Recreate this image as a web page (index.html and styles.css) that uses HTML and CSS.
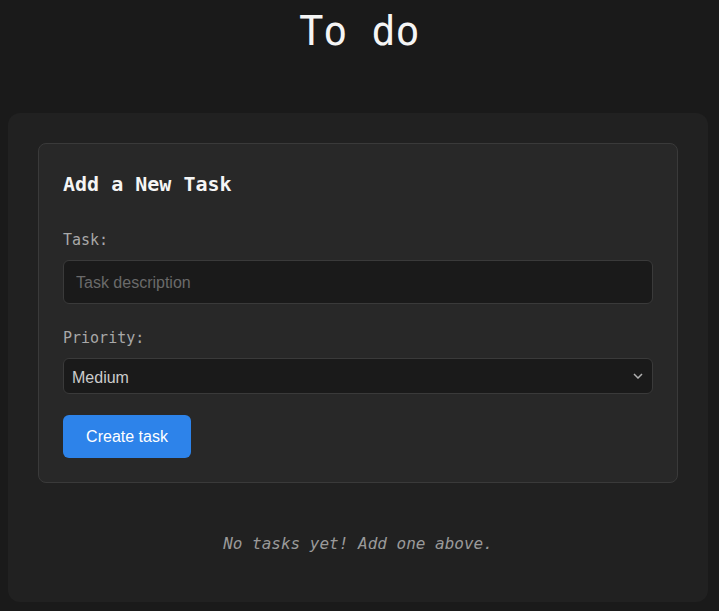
FILE: index.html
```html
<!DOCTYPE html>
<html lang="en">
<head>
<meta charset="utf-8">
<title>To do</title>
<link rel="stylesheet" href="styles.css">
</head>
<body>
<h1 class="title">To do</h1>
<main class="container">
  <section class="form-card">
    <h2 class="form-title">Add a New Task</h2>
    <div class="form-group form-group--text">
      <label class="label" for="task">Task:</label>
      <input class="input" id="task" type="text" placeholder="Task description">
    </div>
    <div class="form-group">
      <label class="label" for="priority">Priority:</label>
      <div class="select-wrap">
        <select class="select" id="priority">
          <option>Low</option>
          <option selected>Medium</option>
          <option>High</option>
        </select>
        <svg class="chevron" width="10" height="6" viewBox="0 0 10 6" aria-hidden="true"><path d="M1 1l4 4 4-4" fill="none" stroke="#b0b0b0" stroke-width="1.5"/></svg>
      </div>
    </div>
    <button class="btn" type="button">Create task</button>
  </section>
  <p class="empty">No tasks yet! Add one above.</p>
</main>
</body>
</html>
```
FILE: styles.css
```css
html, body {
  background: #1a1a1a;
}
body {
  margin: 8px;
  font-family: "DejaVu Sans Mono", "Liberation Mono", monospace;
  color: #eeeeee;
}
.title {
  margin: 0 0 58px;
  text-align: center;
  font-size: 40px;
  font-weight: 400;
  line-height: 47px;
  color: #f5f5f5;
}
.container {
  width: 700px;
  box-sizing: border-box;
  background: #212121;
  border-radius: 12px;
  padding: 30px;
}
.form-card {
  background: #282828;
  border: 1px solid #3a3a3a;
  border-radius: 8px;
  padding: 24px;
}
.form-title {
  margin: 1px 0 30px;
  font-size: 20px;
  line-height: 30px;
  font-weight: 700;
  color: #f5f5f5;
}
.form-group {
  margin-bottom: 21px;
}
.form-group--text {
  margin-bottom: 23px;
}
.label {
  display: block;
  font-size: 15px;
  line-height: 22px;
  color: #a8a8a8;
  margin-bottom: 9px;
}
.input, .select {
  display: block;
  width: 100%;
  box-sizing: border-box;
  background: #1a1a1a;
  border: 1px solid #3a3a3a;
  border-radius: 6px;
  font-family: "Liberation Sans", Arial, sans-serif;
  font-size: 16px;
  outline: none;
}
.input {
  height: 44px;
  padding: 2px 12px 0;
  color: #dddddd;
}
.input::placeholder {
  color: #6a6a6a;
}
.select-wrap {
  position: relative;
}
.select {
  height: 36px;
  padding: 2px 8px 0;
  color: #cccccc;
  -webkit-appearance: none;
  appearance: none;
}
.chevron {
  position: absolute;
  right: 10px;
  top: 15px;
  pointer-events: none;
}
.btn {
  display: block;
  width: 128px;
  height: 43px;
  border: none;
  border-radius: 6px;
  background: #2d83ea;
  color: #ffffff;
  font-family: "Liberation Sans", Arial, sans-serif;
  font-size: 16px;
  padding: 0;
}
.empty {
  margin: 31px 0 0;
  padding: 20px 0 19px;
  text-align: center;
  font-style: italic;
  font-size: 16px;
  line-height: 19px;
  color: #9a9a9a;
}
```
